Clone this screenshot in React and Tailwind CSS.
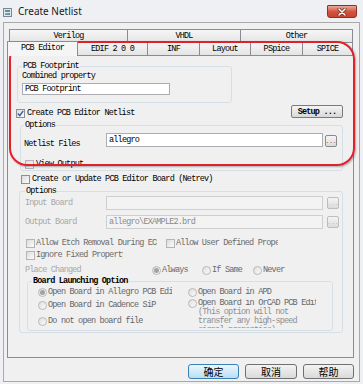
import React from "react";

function Check({ checked, dim }) {
  return (
    <span
      className={
        "w-[9px] h-[9px] shrink-0 border flex items-center justify-center bg-linear-to-br from-[#dcdcdc] to-[#fcfcfc] " +
        (dim ? "border-[#b4b4b4]" : "border-[#8e8f8f]")
      }
    >
      {checked && (
        <svg width="7" height="7" viewBox="0 0 7 7">
          <path d="M0.8 3.6 L2.8 5.6 L6.2 0.8" fill="none" stroke="#3a5aa0" strokeWidth="1.4" />
        </svg>
      )}
    </span>
  );
}

function Radio({ on }) {
  return (
    <span className="w-[9px] h-[9px] shrink-0 rounded-full border border-[#b8b8b8] bg-linear-to-br from-[#dedede] to-[#fbfbfb] flex items-center justify-center">
      {on && <span className="w-[5px] h-[5px] rounded-full bg-[#a3a3a3]" />}
    </span>
  );
}

function Dots({ dim }) {
  return (
    <span
      className={
        "w-[12px] h-[12px] shrink-0 rounded-[2px] border flex items-end justify-center bg-linear-to-b from-[#f4f4f4] to-[#dcdcdc] text-[6px] leading-[8px] tracking-[0px] " +
        (dim ? "border-[#bdbdbd] text-[#b0b0b0]" : "border-[#8a8a8a] text-[#333]")
      }
    >
      ...
    </span>
  );
}

export default function App() {
  return (
    <div className="relative w-[363px] h-[384px] bg-[#eef0f3] flex flex-col overflow-hidden font-['Liberation_Mono',monospace] text-[8.5px] tracking-[-0.8px] leading-[10px] text-black whitespace-nowrap">
      {/* Title bar */}
      <div className="h-[22px] flex items-start shrink-0">
        <div className="ml-[3px] mt-[8px] w-[9px] h-[9px] border border-[#7b8894] bg-[#dfe6ec] flex flex-col p-[1px] gap-[1px]">
          <span className="h-[2px] bg-[#5f8f9e]" />
          <span className="flex-1 bg-linear-to-br from-[#8fc3a5] to-[#4f7f8f]" />
        </div>
        <span className="ml-[6px] mt-[5px] font-['Noto_Sans',sans-serif] text-[10px] leading-[13px] tracking-normal text-[#1a1a1a]">
          Create Netlist
        </span>
        <div className="ml-auto mr-[6px] mt-[5px] w-[30px] h-[13px] rounded-b-[3px] rounded-t-[1px] border border-[#8b3328] bg-linear-to-b from-[#e9a99c] via-[#d2553f] to-[#c8452d] flex items-center justify-center">
          <svg width="10" height="8" viewBox="0 0 10 8">
            <path d="M2 1 L8 7 M8 1 L2 7" stroke="#6b2a20" strokeWidth="3" strokeLinecap="round" />
            <path d="M2 1 L8 7 M8 1 L2 7" stroke="#ffffff" strokeWidth="1.6" strokeLinecap="round" />
          </svg>
        </div>
      </div>

      {/* Client area */}
      <div className="mx-[3px] mb-[2px] flex-1 border border-[#a9a9a9] bg-[#f0f0f0] flex flex-col">
        <div className="ml-[3px] mt-[6px] flex flex-col">
          {/* Tab row 1 */}
          <div className="ml-[2px] flex h-[13px]">
            <div className="w-[118px] border-t border-l border-[#898c95] bg-linear-to-b from-[#f6f6f6] to-[#e4e4e4] flex items-center justify-center">Verilog</div>
            <div className="w-[113px] border-t border-l border-[#898c95] bg-linear-to-b from-[#f6f6f6] to-[#e4e4e4] flex items-center justify-center">VHDL</div>
            <div className="w-[113px] border-t border-l border-r border-[#898c95] bg-linear-to-b from-[#f6f6f6] to-[#e4e4e4] flex items-center justify-center">Other</div>
          </div>
          {/* Tab row 2 */}
          <div className="flex h-[13px] items-start">
            <div className="relative z-10 w-[71px] h-[15px] -mt-[1px] border-t border-l border-r border-[#898c95] bg-[#f5f5f5] flex items-start justify-center pt-[1px]">PCB Editor</div>
            <div className="w-[69px] h-[13px] border-t border-[#898c95] bg-linear-to-b from-[#f6f6f6] to-[#e4e4e4] flex items-center justify-center">EDIF 2 0 0</div>
            <div className="w-[52px] h-[13px] border-t border-l border-[#898c95] bg-linear-to-b from-[#f6f6f6] to-[#e4e4e4] flex items-center justify-center">INF</div>
            <div className="w-[51px] h-[13px] border-t border-l border-[#898c95] bg-linear-to-b from-[#f6f6f6] to-[#e4e4e4] flex items-center justify-center">Layout</div>
            <div className="w-[52px] h-[13px] border-t border-l border-[#898c95] bg-linear-to-b from-[#f6f6f6] to-[#e4e4e4] flex items-center justify-center">PSpice</div>
            <div className="w-[51px] h-[13px] border-t border-l border-r border-[#898c95] bg-linear-to-b from-[#f6f6f6] to-[#e4e4e4] flex items-center justify-center">SPICE</div>
          </div>

          {/* Panel */}
          <div className="w-[347px] h-[303px] border border-[#898c95] bg-[#f0f0f0] flex flex-col">
            {/* Row A */}
            <div className="mt-[6px] pr-[10px] flex items-end justify-between">
              <div className="ml-[9px] flex flex-col">
                <fieldset className="w-[215px] border border-[#d5dfe5] rounded-[3px] pl-[4px] pb-[7px]">
                  <legend className="px-[1px] leading-[9px]">PCB Footprint</legend>
                  <div>Combined property</div>
                  <div className="mt-[2px] w-[148px] h-[12px] border border-[#abadb3] bg-white px-[2px] flex items-center">PCB Footprint</div>
                </fieldset>
                <div className="mt-[5px] -ml-[1px] flex items-center gap-[2px]">
                  <Check checked />
                  <span>Create PCB Editor Netlist</span>
                </div>
              </div>
              <div className="w-[52px] h-[13px] rounded-[2px] border border-[#7a7a7a] bg-linear-to-b from-[#f4f4f4] to-[#d8d8d8] flex items-center justify-center font-bold">
                Setup ...
              </div>
            </div>

            {/* Options 1 */}
            <fieldset className="ml-[12px] mt-[3px] w-[323px] border border-[#d5dfe5] rounded-[3px] pl-[3px] pb-[1px]">
              <legend className="px-[1px] leading-[9px]">Options</legend>
              <div className="mt-[3px] flex items-start">
                <span className="w-[82px] mt-[6px]">Netlist Files</span>
                <div className="w-[217px] h-[14px] border border-[#abadb3] bg-white px-[2px] flex items-center">allegro</div>
                <span className="ml-[2px] mt-[2px]">
                  <Dots />
                </span>
              </div>
              <div className="mt-[10px] ml-[1px] flex items-center gap-[2px]">
                <Check dim />
                <span>View Output</span>
              </div>
            </fieldset>

            {/* Create or Update checkbox */}
            <div className="ml-[13px] mt-[3px] flex items-center gap-[2px]">
              <Check />
              <span>Create or Update PCB Editor Board (Netrev)</span>
            </div>

            {/* Options 2 */}
            <fieldset className="ml-[11px] mt-[3px] w-[324px] border border-[#d5dfe5] rounded-[3px] pl-[5px] pb-[1px]">
              <legend className="px-[1px] leading-[9px]">Options</legend>
              <div className="flex items-center">
                <span className="w-[81px] text-[#a8a8a8]">Input Board</span>
                <div className="w-[217px] h-[14px] border border-[#cfcfcf] bg-[#f3f3f3]" />
                <span className="ml-[4px]">
                  <Dots dim />
                </span>
              </div>
              <div className="mt-[5px] flex items-center">
                <span className="w-[81px] text-[#a8a8a8]">Output Board</span>
                <div className="w-[217px] h-[14px] border border-[#cfcfcf] bg-[#f3f3f3] px-[2px] flex items-center text-[#8a8a8a]">
                  allegro\EXAMPLE2.brd
                </div>
                <span className="ml-[4px]">
                  <Dots dim />
                </span>
              </div>
              <div className="mt-[9px] flex items-center">
                <div className="w-[140px] ml-[1px] flex items-center gap-[1px]">
                  <Check dim />
                  <span className="w-[121px] overflow-hidden text-[#6a6a6a]">Allow Etch Removal During ECO</span>
                </div>
                <div className="flex items-center gap-[1px]">
                  <Check dim />
                  <span className="w-[102px] overflow-hidden text-[#6a6a6a]">Allow User Defined Property</span>
                </div>
              </div>
              <div className="mt-[2px] ml-[1px] flex items-center gap-[1px]">
                <Check dim />
                <span className="w-[87px] overflow-hidden text-[#6a6a6a]">Ignore Fixed Property</span>
              </div>
              <div className="mt-[5px] flex items-center">
                <span className="w-[127px] text-[#a8a8a8]">Place Changed</span>
                <div className="w-[50px] flex items-center gap-[1px]">
                  <Radio on />
                  <span className="text-[#6a6a6a]">Always</span>
                </div>
                <div className="w-[51px] flex items-center gap-[1px]">
                  <Radio />
                  <span className="text-[#6a6a6a]">If Same</span>
                </div>
                <div className="flex items-center gap-[1px]">
                  <Radio />
                  <span className="text-[#6a6a6a]">Never</span>
                </div>
              </div>

              {/* Board Launching Option */}
              <fieldset className="ml-[2px] mt-[2px] w-[306px] border border-[#d5dfe5] rounded-[3px] pl-[4px] pb-[2px]">
                <legend className="px-[1px] leading-[9px] font-bold">Board Launching Option</legend>
                <div className="mt-[1px] flex items-start">
                  <div className="ml-[6px] w-[150px] flex flex-col text-[#666]">
                    <div className="flex items-center gap-[1px]">
                      <Radio on />
                      <span className="w-[124px] overflow-hidden">Open Board in Allegro PCB Editor</span>
                    </div>
                    <div className="mt-[3px] flex items-center gap-[1px]">
                      <Radio />
                      <span>Open Board in Cadence SiP</span>
                    </div>
                    <div className="mt-[6px] flex items-center gap-[1px]">
                      <Radio />
                      <span>Do not open board file</span>
                    </div>
                  </div>
                  <div className="h-[41px] overflow-hidden flex flex-col text-[#666]">
                    <div className="flex items-center gap-[1px]">
                      <Radio />
                      <span>Open Board in APD</span>
                    </div>
                    <div className="mt-[2px] flex items-start gap-[1px]">
                      <Radio />
                      <div className="flex flex-col leading-[9px]">
                        <span className="w-[118px] overflow-hidden">Open Board in OrCAD PCB Editor</span>
                        <span className="text-[#8f8f8f]">(This option will not</span>
                        <span className="text-[#8f8f8f]">transfer any high-speed</span>
                        <span className="text-[#8f8f8f]">signal properties)</span>
                      </div>
                    </div>
                  </div>
                </div>
              </fieldset>
            </fieldset>
          </div>
        </div>

        {/* Buttons */}
        <div className="mt-[6px] pr-[5px] flex justify-end gap-[6px] font-['Noto_Sans_CJK_SC',sans-serif] text-[10px] tracking-normal leading-[12px]">
          <div className="w-[51px] h-[15px] rounded-[3px] border border-[#3c7fb1] bg-linear-to-b from-[#eaf6fd] to-[#b9def5] flex items-center justify-center">确定</div>
          <div className="w-[52px] h-[15px] rounded-[3px] border border-[#707070] bg-linear-to-b from-[#f3f3f3] to-[#dadada] flex items-center justify-center">取消</div>
          <div className="w-[51px] h-[15px] rounded-[3px] border border-[#707070] bg-linear-to-b from-[#f3f3f3] to-[#dadada] flex items-center justify-center">帮助</div>
        </div>
      </div>

      {/* Red annotation */}
      <div className="absolute left-[9px] top-[41px] w-[346px] h-[125px] rounded-[18px] border-2 border-[#e3202a] shadow-[1px_1px_2px_rgba(0,0,0,0.3)] pointer-events-none" />
    </div>
  );
}
